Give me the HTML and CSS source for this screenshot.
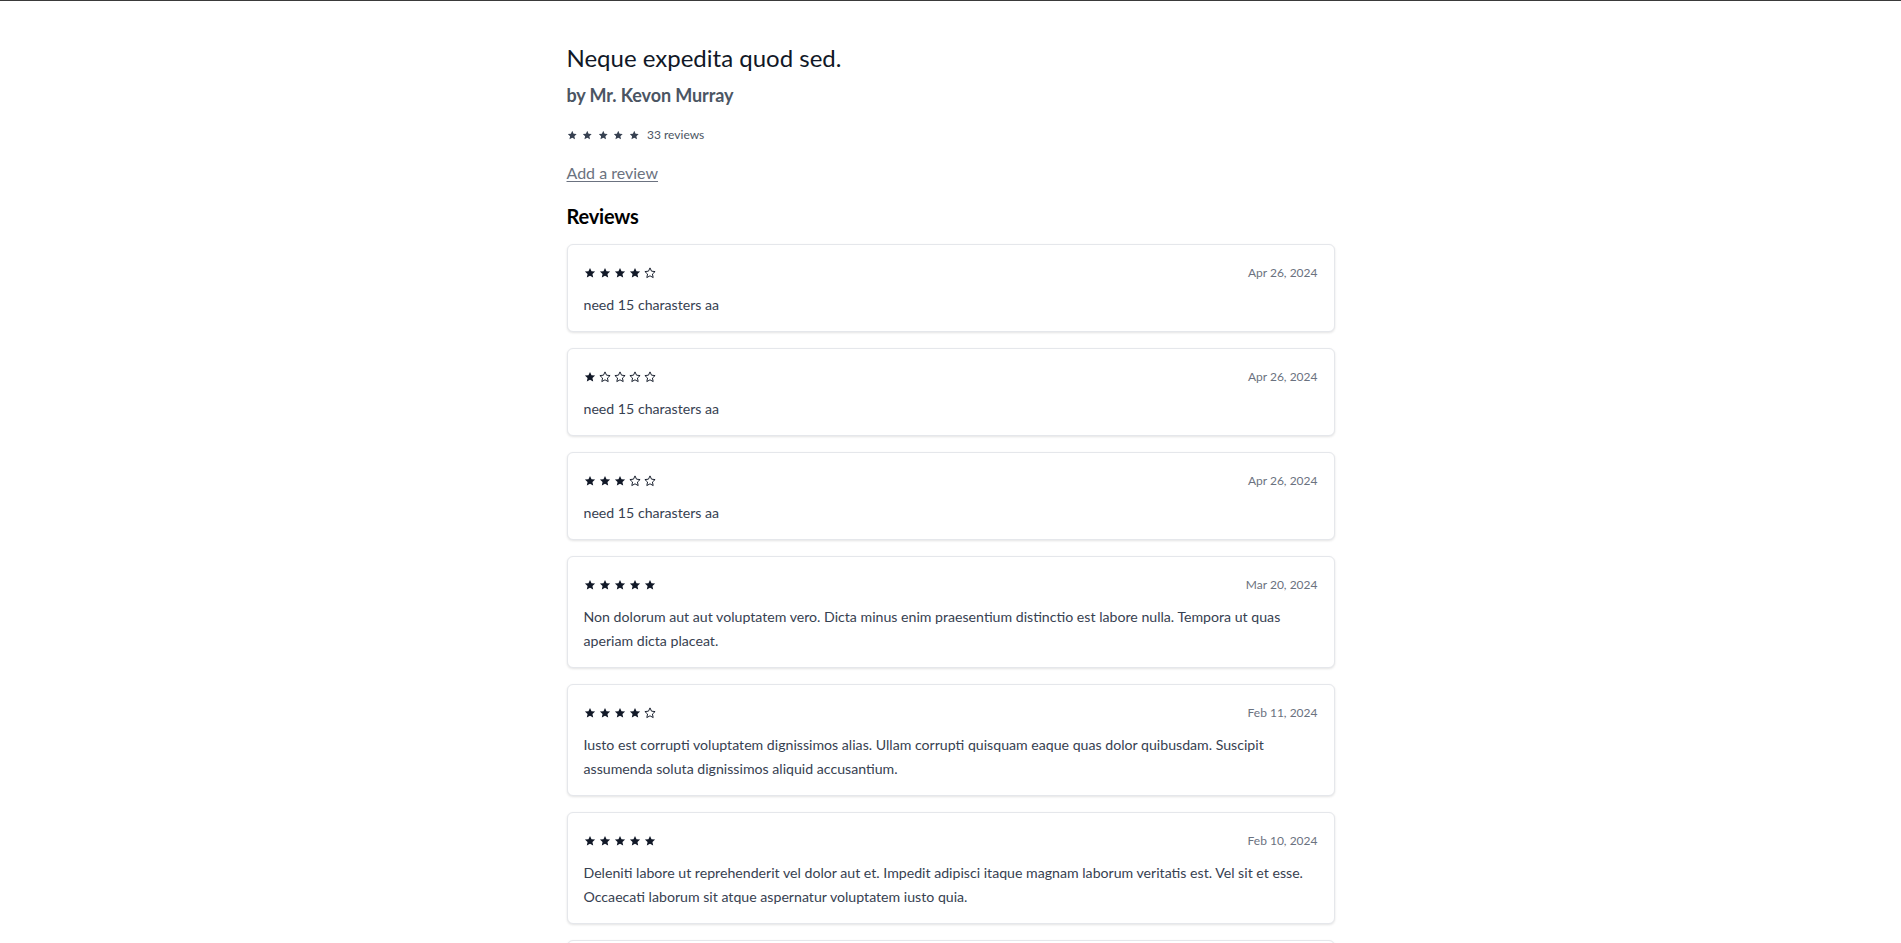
FILE: index.html
```html
<!DOCTYPE html>
<html lang="en">
<head>
<meta charset="utf-8">
<title>Neque expedita quod sed.</title>
<link rel="stylesheet" href="styles.css">
</head>
<body>
<svg class="defs" width="0" height="0" aria-hidden="true">
  <defs>
    <symbol id="star" viewBox="0 0 24 24"><path d="M12 1.8l3.05 6.55 7.15.8-5.3 4.9 1.45 7.1L12 17.6l-6.35 3.55 1.45-7.1-5.3-4.9 7.15-.8z"/></symbol>
  </defs>
</svg>
<main class="page">
  <h1 class="title">Neque expedita quod sed.</h1>
  <h2 class="author">by Mr. Kevon Murray</h2>
  <div class="summary">
    <span class="stars stars-sm">
      <svg class="star full"><use href="#star"/></svg><svg class="star full"><use href="#star"/></svg><svg class="star full"><use href="#star"/></svg><svg class="star full"><use href="#star"/></svg><svg class="star full"><use href="#star"/></svg>
    </span>
    <span class="count">33 reviews</span>
  </div>
  <a class="add-link" href="#">Add a review</a>
  <h3 class="section-title">Reviews</h3>
  <ul class="reviews">
    <li class="card">
      <div class="card-head">
        <span class="stars"><svg class="star full"><use href="#star"/></svg><svg class="star full"><use href="#star"/></svg><svg class="star full"><use href="#star"/></svg><svg class="star full"><use href="#star"/></svg><svg class="star empty"><use href="#star"/></svg></span>
        <span class="date">Apr 26, 2024</span>
      </div>
      <p class="body">need 15 charasters aa</p>
    </li>
    <li class="card">
      <div class="card-head">
        <span class="stars"><svg class="star full"><use href="#star"/></svg><svg class="star empty"><use href="#star"/></svg><svg class="star empty"><use href="#star"/></svg><svg class="star empty"><use href="#star"/></svg><svg class="star empty"><use href="#star"/></svg></span>
        <span class="date">Apr 26, 2024</span>
      </div>
      <p class="body">need 15 charasters aa</p>
    </li>
    <li class="card">
      <div class="card-head">
        <span class="stars"><svg class="star full"><use href="#star"/></svg><svg class="star full"><use href="#star"/></svg><svg class="star full"><use href="#star"/></svg><svg class="star empty"><use href="#star"/></svg><svg class="star empty"><use href="#star"/></svg></span>
        <span class="date">Apr 26, 2024</span>
      </div>
      <p class="body">need 15 charasters aa</p>
    </li>
    <li class="card">
      <div class="card-head">
        <span class="stars"><svg class="star full"><use href="#star"/></svg><svg class="star full"><use href="#star"/></svg><svg class="star full"><use href="#star"/></svg><svg class="star full"><use href="#star"/></svg><svg class="star full"><use href="#star"/></svg></span>
        <span class="date">Mar 20, 2024</span>
      </div>
      <p class="body">Non dolorum aut aut voluptatem vero. Dicta minus enim praesentium distinctio est labore nulla. Tempora ut quas aperiam dicta placeat.</p>
    </li>
    <li class="card">
      <div class="card-head">
        <span class="stars"><svg class="star full"><use href="#star"/></svg><svg class="star full"><use href="#star"/></svg><svg class="star full"><use href="#star"/></svg><svg class="star full"><use href="#star"/></svg><svg class="star empty"><use href="#star"/></svg></span>
        <span class="date">Feb 11, 2024</span>
      </div>
      <p class="body">Iusto est corrupti voluptatem dignissimos alias. Ullam corrupti quisquam eaque quas dolor quibusdam. Suscipit assumenda soluta dignissimos aliquid accusantium.</p>
    </li>
    <li class="card">
      <div class="card-head">
        <span class="stars"><svg class="star full"><use href="#star"/></svg><svg class="star full"><use href="#star"/></svg><svg class="star full"><use href="#star"/></svg><svg class="star full"><use href="#star"/></svg><svg class="star full"><use href="#star"/></svg></span>
        <span class="date">Feb 10, 2024</span>
      </div>
      <p class="body">Deleniti labore ut reprehenderit vel dolor aut et. Impedit adipisci itaque magnam laborum veritatis est. Vel sit et esse. Occaecati laborum sit atque aspernatur voluptatem iusto quia.</p>
    </li>
    <li class="card">
      <div class="card-head">
        <span class="stars"><svg class="star full"><use href="#star"/></svg><svg class="star full"><use href="#star"/></svg><svg class="star full"><use href="#star"/></svg><svg class="star empty"><use href="#star"/></svg><svg class="star empty"><use href="#star"/></svg></span>
        <span class="date">Jan 28, 2024</span>
      </div>
      <p class="body">Voluptas quia et sit quos. Aut rerum eum dolorem et quidem. Ut ea soluta omnis sed.</p>
    </li>
  </ul>
</main>
</body>
</html>
```
FILE: styles.css
```css
html, body {
  margin: 0;
  padding: 0;
  background: #ffffff;
}
body {
  border-top: 1px solid #3a3a3a;
  font-family: Lato, "Noto Sans", "Liberation Sans", sans-serif;
  color: #111827;
}
.defs {
  position: absolute;
  width: 0;
  height: 0;
  overflow: hidden;
}
.page {
  width: 768px;
  margin: 0 auto;
  padding: 41px 0 40px;
  display: flex;
  flex-direction: column;
  align-items: flex-start;
}
.title {
  margin: 0;
  font-size: 24px;
  line-height: 32px;
  font-weight: 400;
  color: #111827;
}
.author {
  margin: 7px 0 0;
  font-size: 18px;
  line-height: 28px;
  font-weight: 700;
  color: #4b5563;
  letter-spacing: -0.1px;
}
.summary {
  margin-top: 16px;
  height: 20px;
  display: flex;
  align-items: center;
  gap: 8px;
}
.stars {
  display: inline-flex;
  align-items: center;
  gap: 3px;
  color: #111827;
}
.star {
  width: 12px;
  height: 12px;
  display: block;
}
.star.full {
  fill: currentColor;
}
.star.empty {
  fill: none;
  stroke: currentColor;
  stroke-width: 1.9;
  stroke-linejoin: round;
}
.stars-sm {
  gap: 5px;
  color: #374151;
}
.stars-sm .star {
  width: 10.5px;
  height: 10.5px;
}
.count {
  font-size: 12px;
  line-height: 16px;
  color: #4b5563;
}
.add-link {
  margin-top: 16px;
  font-size: 16px;
  line-height: 24px;
  color: #6b7280;
  text-decoration: underline;
  text-underline-offset: 2px;
}
.section-title {
  margin: 17px 0 0;
  font-size: 20px;
  line-height: 28px;
  font-weight: 700;
  color: #000000;
  letter-spacing: -0.2px;
}
.reviews {
  list-style: none;
  margin: 14px 0 0;
  padding: 0;
  width: 100%;
  display: flex;
  flex-direction: column;
  gap: 16px;
}
.card {
  border: 1px solid #e5e7eb;
  border-radius: 6px;
  background: #ffffff;
  box-shadow: 0 1px 3px rgba(0, 0, 0, 0.08), 0 1px 2px rgba(0, 0, 0, 0.04);
  padding: 18px 16px 14px;
}
.card-head {
  height: 20px;
  display: flex;
  align-items: center;
  justify-content: space-between;
  margin-bottom: 10px;
}
.date {
  font-size: 12px;
  line-height: 16px;
  color: #6b7280;
}
.body {
  margin: 0;
  font-size: 14.15px;
  line-height: 24px;
  color: #374151;
}
```
